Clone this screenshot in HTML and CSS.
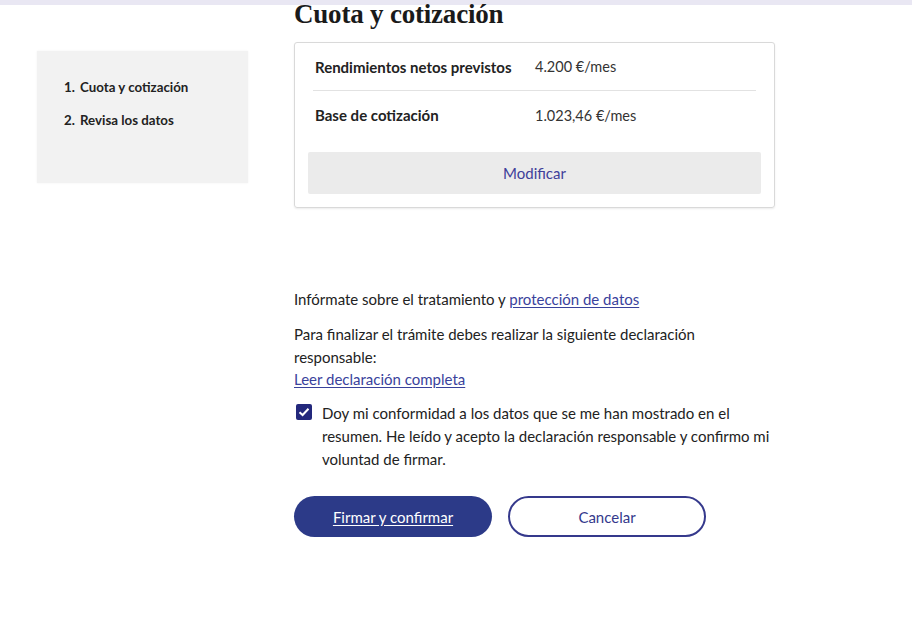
FILE: index.html
```html
<!DOCTYPE html>
<html lang="es">
<head>
	<meta charset="UTF-8">
	<meta name="viewport" content="width=device-width, initial-scale=1.0">
	<title>Cuota y cotización</title>
	<link rel="stylesheet" href="styles.css">
</head>
<body>
	<div class="topbar"></div>
	<div class="page">
		<aside class="steps">
			<ol class="steps__list">
				<li class="steps__item">Cuota y cotización</li>
				<li class="steps__item">Revisa los datos</li>
			</ol>
		</aside>

		<main class="main">
			<h1 class="main__title">Cuota y cotización</h1>

			<div class="card">
				<div class="card__row">
					<span class="card__label">Rendimientos netos previstos</span>
					<span class="card__value">4.200 €/mes</span>
				</div>
				<div class="card__row">
					<span class="card__label">Base de cotización</span>
					<span class="card__value">1.023,46 €/mes</span>
				</div>
				<button class="card__button">Modificar</button>
			</div>

			<div class="legal">
				<p class="legal__text">Infórmate sobre el tratamiento y <a href="#" class="link">protección de datos</a></p>
				<p class="legal__text">Para finalizar el trámite debes realizar la siguiente declaración responsable:<br><a href="#" class="link">Leer declaración completa</a></p>

				<label class="check">
					<span class="check__box">
						<svg width="12" height="10" viewBox="0 0 12 10"><path d="M1.5 5.2 L4.6 8 L10.5 1.8" fill="none" stroke="#fff" stroke-width="2"/></svg>
					</span>
					<span class="check__text">Doy mi conformidad a los datos que se me han mostrado en el resumen. He leído y acepto la declaración responsable y confirmo mi voluntad de firmar.</span>
				</label>

				<div class="actions">
					<button class="btn btn--primary">Firmar y confirmar</button>
					<button class="btn btn--outline">Cancelar</button>
				</div>
			</div>
		</main>
	</div>
</body>
</html>
```

FILE: styles.css
```css
* { box-sizing: border-box }
body {
	margin: 0;
	background: #fff;
	color: #222;
	font-family: Lato, 'Liberation Sans', sans-serif;
	font-size: 15px;
}
.topbar {
	height: 5px;
	background: #e9e7f3;
}
.page {
	display: flex;
	gap: 46px;
	padding-left: 37px;
}
.steps {
	width: 211px;
	height: 132px;
	margin-top: 46px;
	background: #f2f2f2;
	box-shadow: 0 0 2px rgba(0, 0, 0, .06);
}
.steps__list {
	margin: 0;
	padding: 28px 0 0 27px;
	list-style: none;
	counter-reset: step;
	font-size: 13.3px;
	font-weight: 700;
	color: #222;
}
.steps__item {
	display: flex;
	margin-bottom: 16px;
	line-height: 17px;
	counter-increment: step;
}
.steps__item::before {
	content: counter(step) ".";
	width: 16px;
}
.main {
	width: 481px;
}
.main__title {
	margin: -7px 0 12px;
	font-family: 'Liberation Serif', serif;
	font-size: 27px;
	font-weight: 700;
	line-height: 32px;
	letter-spacing: -.2px;
	color: #1a1a1a;
}
.card {
	padding: 0 13px 13px;
	border: 1px solid #d9d9d9;
	border-radius: 3px;
	box-shadow: 0 1px 2px rgba(0, 0, 0, .08);
}
.card__row {
	display: flex;
	align-items: center;
	height: 48px;
	margin: 0 5px;
	padding: 0 2px;
	border-bottom: 1px solid #e2e2e2;
}
.card__row + .card__row {
	border-bottom: 0;
	margin-bottom: 13px;
}
.card__label {
	width: 220px;
	font-weight: 700;
}
.card__value {
	font-size: 14.5px;
	color: #333;
}
.card__button {
	display: block;
	width: 100%;
	height: 42px;
	border: 0;
	border-radius: 2px;
	background: #ebebeb;
	color: #3e409a;
	font-family: inherit;
	font-size: 15px;
	cursor: pointer;
}
.legal {
	margin-top: 80px;
}
.legal__text {
	margin: 0 0 12.5px;
	line-height: 22.5px;
}
.link {
	color: #3a429c;
	text-decoration: underline;
	text-underline-offset: 2px;
}
.check {
	display: flex;
	gap: 10px;
	margin-top: -1.5px;
	line-height: 23px;
}
.check__box {
	display: flex;
	flex: none;
	align-items: center;
	justify-content: center;
	width: 16px;
	height: 16px;
	margin: 2.5px 0 0 2px;
	border-radius: 2px;
	background: #23287c;
}
.actions {
	display: flex;
	gap: 16px;
	margin-top: 25.5px;
}
.btn {
	width: 198px;
	height: 41px;
	border-radius: 21px;
	font-family: inherit;
	font-size: 15px;
	cursor: pointer;
}
.btn--primary {
	border: 0;
	background: #2c3a88;
	color: #fff;
	text-decoration: underline;
	text-underline-offset: 2px;
}
.btn--outline {
	border: 2px solid #35398c;
	background: #fff;
	color: #35398c;
}
```
